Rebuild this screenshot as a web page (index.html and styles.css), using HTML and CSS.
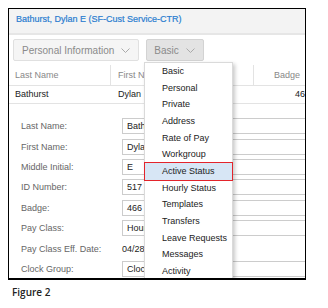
FILE: index.html
```html
<!DOCTYPE html>
<html lang="en">

<head>
    <meta charset="UTF-8">
    <meta name="viewport" content="width=device-width, initial-scale=1.0">
    <title>Figure 2</title>
    <link rel="stylesheet" href="styles.css">
</head>

<body>
    <div class="frame">
        <div class="title">Bathurst, Dylan E (SF-Cust Service-CTR)</div>

        <div class="tabs">
            <div class="tab">Personal Information
                <svg class="chev" width="9" height="5" viewBox="0 0 9 5"><path d="M0.5 0.5 L4.5 4.5 L8.5 0.5" /></svg>
            </div>
            <div class="tab open">Basic
                <svg class="chev" width="9" height="5" viewBox="0 0 9 5"><path d="M0.5 0.5 L4.5 4.5 L8.5 0.5" /></svg>
            </div>
        </div>

        <div class="grid">
            <div class="grid-row head">
                <div class="cell c1">Last Name</div>
                <div class="cell c2">First Name</div>
                <div class="cell c3">Badge</div>
            </div>
            <div class="grid-row">
                <div class="cell c1">Bathurst</div>
                <div class="cell c2">Dylan</div>
                <div class="cell c3 num">466</div>
            </div>
        </div>

        <div class="form">
            <div class="field"><span class="label">Last Name:</span><span class="input">Bathurst</span></div>
            <div class="field"><span class="label">First Name:</span><span class="input">Dylan</span></div>
            <div class="field"><span class="label">Middle Initial:</span><span class="input">E</span></div>
            <div class="field"><span class="label">ID Number:</span><span class="input">517</span></div>
            <div class="field"><span class="label">Badge:</span><span class="input">466</span></div>
            <div class="field"><span class="label">Pay Class:</span><span class="input">Hourly</span></div>
            <div class="field"><span class="label">Pay Class Eff. Date:</span><span class="value">04/28/2019</span></div>
            <div class="field"><span class="label">Clock Group:</span><span class="input">Clock A</span></div>
        </div>

        <!-- dropdown of the Basic tab, lies over the form -->
        <ul class="menu">
            <li>Basic</li>
            <li>Personal</li>
            <li>Private</li>
            <li>Address</li>
            <li>Rate of Pay</li>
            <li>Workgroup</li>
            <li class="current">Active Status</li>
            <li>Hourly Status</li>
            <li>Templates</li>
            <li>Transfers</li>
            <li>Leave Requests</li>
            <li>Messages</li>
            <li>Activity</li>
        </ul>
    </div>

    <p class="caption">Figure 2</p>
</body>

</html>
```

FILE: styles.css
```css
* {
    margin: 0;
    padding: 0;
    list-style: none;
    box-sizing: border-box;
}

body {
    padding: 8px;
    background: #fff;
    font-family: "Liberation Sans", Arial, sans-serif;
    font-size: 9px;
    color: #222;
}

.frame {
    width: 298px;
    height: 272px;
    border: 1px solid #000;
    border-bottom-width: 2px;
    position: relative;
    overflow: hidden;
}

.title {
    background: #f3f3f3;
    border-bottom: 2px solid #e6e6e6;
    color: #2a7dd0;
    line-height: 11px;
    padding: 5px 7px 8px;
    -webkit-text-stroke: 0.2px #2a7dd0;
}

.tabs {
    display: flex;
    gap: 7px;
    margin: 4px 0 0 4px;
}

.tab {
    height: 22px;
    display: flex;
    align-items: center;
    gap: 7px;
    padding: 0 8px;
    font-size: 10px;
    color: #8a8a8a;
    background: #f5f5f5;
    border: 1px solid #e0e0e0;
    border-radius: 2px;
}

.tab.open {
    background: #e3e3e3;
    border-color: #d3d3d3;
    padding-left: 7px;
}

.chev path {
    fill: none;
    stroke: #aaa;
    stroke-width: 1;
}

/* the small result table */
.grid {
    margin-top: 4px;
}

.grid-row {
    display: flex;
    border-bottom: 1px solid #e3e3e3;
}

.cell {
    height: 17px;
    line-height: 17px;
    white-space: nowrap;
    overflow: hidden;
    flex-shrink: 0;
}

.head .cell {
    height: 20px;
    line-height: 20px;
    color: #888;
}

.c1 {
    width: 102px;
    padding-left: 6px;
}

.c2 {
    width: 143px;
    padding-left: 7px;
}

.c3 {
    width: 66px;
    text-align: center;
}

.head .c1,
.head .c2 {
    border-right: 1px solid #e3e3e3;
}

.num {
    text-align: right;
    padding-right: 10px;
}

/* detail form */
.form {
    padding: 12px 0 0 12px;
}

.field {
    height: 20.4px;
    display: flex;
    align-items: center;
}

.label {
    width: 101px;
    color: #666;
    flex-shrink: 0;
}

.input {
    width: 200px;
    height: 16px;
    line-height: 14px;
    padding-left: 4px;
    border: 1px solid #ccc;
    flex-shrink: 0;
}

.value {
    padding-top: 1px;
}

.menu {
    position: absolute;
    left: 135px;
    top: 53px;
    width: 89px;
    background: #fff;
    border: 1px solid #dadada;
    box-shadow: 2px 2px 4px rgba(0, 0, 0, 0.22);
}

.menu li {
    height: 16.67px;
    line-height: 16.67px;
    padding-left: 17px;
    color: #222;
    white-space: nowrap;
}

.menu li.current {
    background: #d7e6f5;
    outline: 1px solid #e3242b;
}

.caption {
    margin-top: 5px;
    padding-left: 4px;
    font-family: "Open Sans", sans-serif;
    font-weight: 600;
    font-size: 10px;
    line-height: 14px;
    color: #222;
}
```
